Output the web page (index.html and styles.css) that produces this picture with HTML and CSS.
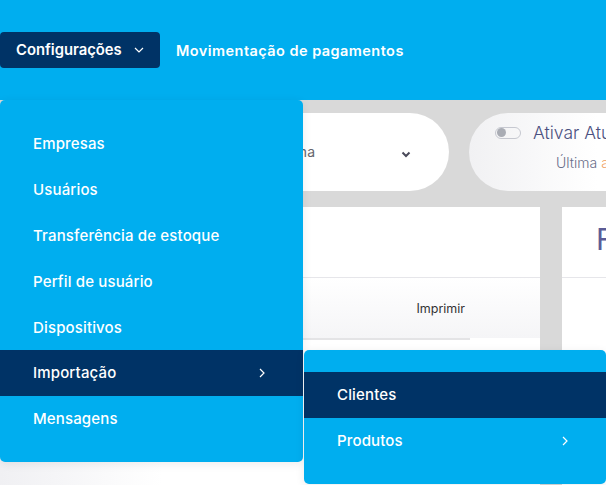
FILE: index.html
```html
<!DOCTYPE html>
<html lang="pt-BR">
<head>
  <meta charset="UTF-8">
  <title>Configurações</title>
  <link rel="stylesheet" href="styles.css">
</head>
<body>
  <header class="topbar">
    <button class="nav-btn active">Configurações
      <svg class="chev" width="10" height="6" viewBox="0 0 10 6"><path d="M1 1l4 4 4-4" fill="none" stroke="#fff" stroke-width="1.2"/></svg>
    </button>
    <a class="nav-link" href="#">Movimentação de pagamentos</a>
  </header>

  <main class="page">
    <div class="filters">
      <div class="pill pill-select">
        <span class="select-label">Todas as lojas da plataforma</span>
        <svg class="select-chev" width="10" height="7" viewBox="0 0 10 7"><path d="M1.5 1.5l3.5 3.5 3.5-3.5" fill="none" stroke="#4a4a5a" stroke-width="2"/></svg>
      </div>
      <div class="pill pill-sync">
        <div class="sync-row">
          <span class="toggle"><span class="knob"></span></span>
          <span class="sync-title">Ativar Atu</span>
        </div>
        <div class="sync-sub">Última <span class="accent">a</span></div>
      </div>
    </div>

    <div class="cards">
      <section class="card card-main">
        <div class="card-head"></div>
        <div class="card-tools">
          <span class="tool">Imprimir</span>
        </div>
        <div class="card-line"></div>
      </section>
      <section class="card card-side">
        <div class="card-head"><span class="side-title">F</span></div>
      </section>
    </div>
  </main>

  <nav class="menu">
    <a class="menu-item" href="#">Empresas</a>
    <a class="menu-item" href="#">Usuários</a>
    <a class="menu-item" href="#">Transferência de estoque</a>
    <a class="menu-item" href="#">Perfil de usuário</a>
    <a class="menu-item" href="#">Dispositivos</a>
    <a class="menu-item selected" href="#">Importação
      <svg class="chev-r" width="6" height="10" viewBox="0 0 6 10"><path d="M1 1l4 4-4 4" fill="none" stroke="#fff" stroke-width="1.2"/></svg>
    </a>
    <a class="menu-item" href="#">Mensagens</a>
  </nav>

  <nav class="menu submenu">
    <a class="menu-item selected" href="#">Clientes</a>
    <a class="menu-item" href="#">Produtos
      <svg class="chev-r" width="6" height="10" viewBox="0 0 6 10"><path d="M1 1l4 4-4 4" fill="none" stroke="#fff" stroke-width="1.2"/></svg>
    </a>
  </nav>
</body>
</html>
```

FILE: styles.css
```css
html, body {
  margin: 0;
  padding: 0;
  height: 100%;
  overflow: hidden;
}
body {
  font-family: Inter, "Open Sans", sans-serif;
  background: #d9d9d9;
  position: relative;
}
a {
  text-decoration: none;
  color: inherit;
}

.topbar {
  height: 100px;
  background: #00aeef;
  display: flex;
  align-items: center;
  gap: 16px;
}
.nav-btn {
  height: 36px;
  width: 160px;
  padding: 0 0 0 16px;
  background: #003366;
  color: #fff;
  border: none;
  border-radius: 4px;
  font: 600 14.8px Inter, sans-serif;
  display: flex;
  align-items: center;
  gap: 12px;
}
.nav-link {
  color: #fff;
  font-weight: 600;
  font-size: 14.5px;
  letter-spacing: 0.45px;
}

.page {
  padding-top: 13px;
}
.filters {
  display: flex;
  gap: 20px;
  margin-left: 40px;
}
.pill {
  height: 78px;
  border-radius: 39px;
  background: linear-gradient(90deg, #f1f1f3, #fff 40%);
  box-sizing: border-box;
  flex-shrink: 0;
}
.pill-select {
  width: 409px;
  display: flex;
  align-items: center;
}
.select-label {
  width: 275px;
  text-align: right;
  font-size: 14px;
  color: #66666e;
  margin-top: -1px;
}
.select-chev {
  margin-left: 86px;
  margin-top: 4px;
}
.pill-sync {
  width: 320px;
  padding: 9px 0 0 26px;
}
.sync-row {
  display: flex;
  align-items: center;
  gap: 12px;
}
.toggle {
  width: 22px;
  height: 10px;
  border: 1.5px solid #c6c8d0;
  border-radius: 7px;
  display: flex;
  align-items: center;
  padding: 0 1px;
}
.knob {
  width: 9px;
  height: 9px;
  border-radius: 50%;
  background: #a9acb4;
}
.sync-title {
  font-size: 17.5px;
  font-weight: 300;
  color: #4b5080;
}
.sync-sub {
  margin: 11px 0 0 61px;
  font-size: 14px;
  font-weight: 300;
  color: #6a6e8a;
}
.accent {
  color: #f0a060;
}

.cards {
  display: flex;
  gap: 22px;
  margin-top: 16px;
}
.card {
  background: linear-gradient(90deg, #f0f0f3, #fff 30%);
  height: 300px;
  flex-shrink: 0;
}
.card-main {
  width: 540px;
}
.card-side {
  width: 300px;
  background: #fff;
}
.card-head {
  height: 70px;
  border-bottom: 1.5px solid #e6e6ea;
  display: flex;
  align-items: center;
}
.card-tools {
  height: 60px;
  display: flex;
  align-items: center;
  justify-content: flex-end;
  padding-right: 75px;
  background: linear-gradient(180deg, #fff, #f5f5f7);
}
.tool {
  font-size: 12.5px;
  color: #333;
}
.card-line {
  width: 470px;
  height: 2px;
  background: #e4e4e6;
}
.side-title {
  margin-left: 34px;
  margin-top: -6px;
  font-size: 30px;
  color: #5b5c97;
}

.menu {
  position: absolute;
  left: 0;
  top: 100px;
  width: 303px;
  padding: 21px 0 20px;
  background: #00aeef;
  border-radius: 5px;
  box-shadow: 0 2px 10px rgba(0, 0, 0, 0.08);
  display: flex;
  flex-direction: column;
}
.menu-item {
  height: 45.8px;
  flex-shrink: 0;
  padding: 0 38px 0 33px;
  display: flex;
  align-items: center;
  justify-content: space-between;
  color: #fff;
  font-size: 15px;
  font-weight: 500;
  letter-spacing: 0.15px;
}
.menu-item.selected {
  background: #003366;
}
.submenu {
  left: 304px;
  top: 350px;
  width: 302px;
  padding: 22px 0 20px;
}
.chev-r {
  margin-top: 1px;
}
```
